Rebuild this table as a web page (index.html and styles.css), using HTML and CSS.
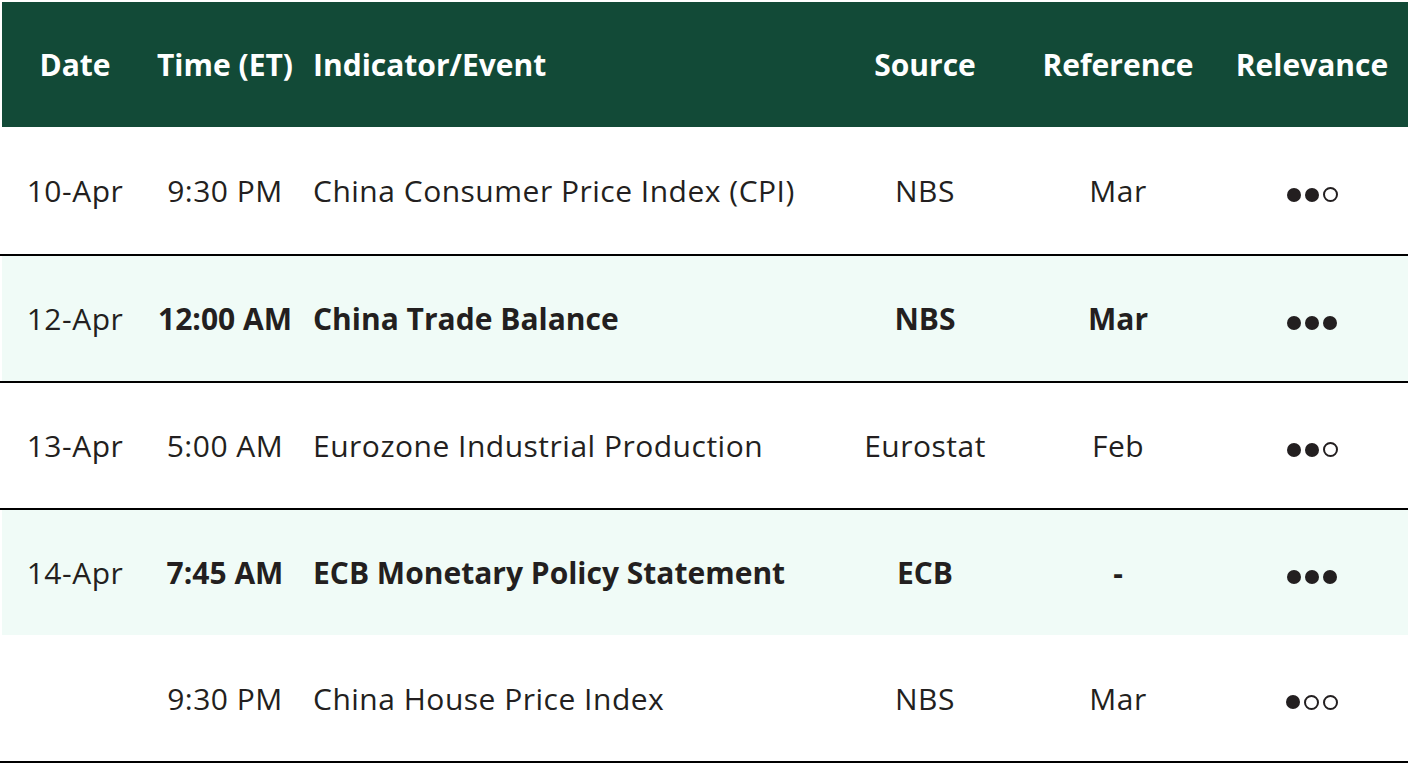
FILE: index.html
```html
<!DOCTYPE html>
<html lang="en">
<head>
<meta charset="utf-8">
<title>Economic Calendar</title>
<link rel="stylesheet" href="styles.css">
</head>
<body>
<div class="cal">
  <div class="row head">
    <div class="c ctr">Date</div>
    <div class="c ctr">Time (ET)</div>
    <div class="c left">Indicator/Event</div>
    <div class="c ctr">Source</div>
    <div class="c ctr">Reference</div>
    <div class="c ctr">Relevance</div>
  </div>
  <div class="row first border">
    <div class="c ctr">10-Apr</div>
    <div class="c ctr">9:30 PM</div>
    <div class="c left">China Consumer Price Index (CPI)</div>
    <div class="c ctr">NBS</div>
    <div class="c ctr">Mar</div>
    <div class="c ctr"><span class="dots"><i class="d on"></i><i class="d on"></i><i class="d off"></i></span></div>
  </div>
  <div class="row shade bold border">
    <div class="c ctr normal">12-Apr</div>
    <div class="c ctr">12:00 AM</div>
    <div class="c left">China Trade Balance</div>
    <div class="c ctr">NBS</div>
    <div class="c ctr">Mar</div>
    <div class="c ctr"><span class="dots"><i class="d on"></i><i class="d on"></i><i class="d on"></i></span></div>
  </div>
  <div class="row border">
    <div class="c ctr">13-Apr</div>
    <div class="c ctr">5:00 AM</div>
    <div class="c left">Eurozone Industrial Production</div>
    <div class="c ctr">Eurostat</div>
    <div class="c ctr">Feb</div>
    <div class="c ctr"><span class="dots"><i class="d on"></i><i class="d on"></i><i class="d off"></i></span></div>
  </div>
  <div class="row shade bold">
    <div class="c ctr normal">14-Apr</div>
    <div class="c ctr">7:45 AM</div>
    <div class="c left">ECB Monetary Policy Statement</div>
    <div class="c ctr">ECB</div>
    <div class="c ctr">-</div>
    <div class="c ctr"><span class="dots"><i class="d on"></i><i class="d on"></i><i class="d on"></i></span></div>
  </div>
  <div class="row last border">
    <div class="c ctr"></div>
    <div class="c ctr">9:30 PM</div>
    <div class="c left">China House Price Index</div>
    <div class="c ctr">NBS</div>
    <div class="c ctr">Mar</div>
    <div class="c ctr"><span class="dots"><i class="d on"></i><i class="d off"></i><i class="d off"></i></span></div>
  </div>
</div>
</body>
</html>
```

FILE: styles.css
```css
html, body {
  margin: 0;
  padding: 0;
  background: #ffffff;
}
body {
  font-family: "Open Sans", "Noto Sans", sans-serif;
  color: #231f20;
  font-size: 30px;
}
.cal {
  padding-top: 2px;
  width: 1408px;
}
.row {
  display: grid;
  grid-template-columns: 146px 150px 526px 190px 192px 192px;
  column-gap: 2px;
  height: 125px;
  padding-left: 2px;
  background-clip: content-box;
  align-items: center;
}
.row.border {
  border-bottom: 2px solid #000;
}
.row.first {
  height: 127px;
}
.row.last {
  height: 126px;
}
.head {
  background-color: #124a37;
  color: #ffffff;
  font-weight: 700;
}
.shade {
  background-color: #f0fbf7;
}
.c {
  white-space: nowrap;
  letter-spacing: 0.5px;
}
.head .c,
.bold .c {
  font-weight: 700;
  letter-spacing: 0;
}
.bold .c.normal {
  font-weight: 400;
  letter-spacing: 0.5px;
}
.ctr {
  text-align: center;
}
.left {
  text-align: left;
  padding-left: 11px;
}
.dots {
  display: inline-flex;
  align-items: center;
  gap: 4px;
  vertical-align: middle;
  position: relative;
  top: 1px;
}
.d {
  display: block;
  width: 14px;
  height: 14px;
  border-radius: 50%;
  box-sizing: border-box;
}
.d.on {
  background: #231f20;
}
.d.off {
  width: 15px;
  height: 15px;
  border: 2px solid #231f20;
}
```
